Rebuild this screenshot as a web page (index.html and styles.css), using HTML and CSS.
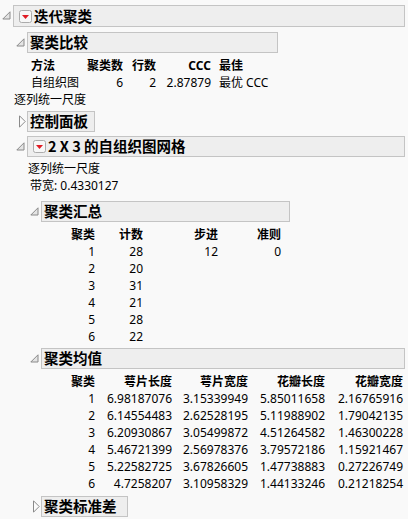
FILE: index.html
```html
<!DOCTYPE html>
<html lang="zh">
<head>
<meta charset="utf-8">
<link rel="stylesheet" href="styles.css">
</head>
<body>
<section class="ol top">
  <div class="oh">
    <span class="tw"><svg class="tri-open" width="9" height="9" viewBox="0 0 9 9"><polygon points="8,0.8 8,8 0.8,8" fill="#e4e4e4" stroke="#8a8a8a" stroke-width="1"/></svg></span>
    <div class="ob full big"><svg class="rb" width="13" height="13" viewBox="0 0 13 13"><rect x="0.5" y="0.5" width="12" height="12" rx="2" fill="#f7f7f7" stroke="#ababab"/><polygon points="3,5 10,5 6.5,9" fill="#e01b24"/></svg><span>迭代聚类</span></div>
  </div>
  <div class="obody">
    <section class="ol m5">
      <div class="oh">
        <span class="tw"><svg class="tri-open" width="9" height="9" viewBox="0 0 9 9"><polygon points="8,0.8 8,8 0.8,8" fill="#e4e4e4" stroke="#8a8a8a" stroke-width="1"/></svg></span>
        <div class="ob w-cmp"><span>聚类比较</span></div>
      </div>
      <div class="obody">
        <table class="t t-cmp">
          <tr class="hd"><td class="c1">方法</td><td class="c2">聚类数</td><td class="c3">行数</td><td class="c4">CCC</td><td class="c5">最佳</td></tr>
          <tr><td class="c1">自组织图</td><td class="c2">6</td><td class="c3">2</td><td class="c4">2.87879</td><td class="c5">最优 CCC</td></tr>
        </table>
      </div>
    </section>
    <div class="txt">逐列统一尺度</div>
    <section class="ol m3">
      <div class="oh">
        <span class="tw"><svg class="tri-closed" width="7" height="13" viewBox="0 0 7 13"><polygon points="0.5,0.8 6.2,6.5 0.5,12.2" fill="#fbfbfb" stroke="#8a8a8a" stroke-width="1"/></svg></span>
        <div class="ob w-ctl"><span>控制面板</span></div>
      </div>
    </section>
    <section class="ol m4">
      <div class="oh">
        <span class="tw"><svg class="tri-open" width="9" height="9" viewBox="0 0 9 9"><polygon points="8,0.8 8,8 0.8,8" fill="#e4e4e4" stroke="#8a8a8a" stroke-width="1"/></svg></span>
        <div class="ob full"><svg class="rb" width="13" height="13" viewBox="0 0 13 13"><rect x="0.5" y="0.5" width="12" height="12" rx="2" fill="#f7f7f7" stroke="#ababab"/><polygon points="3,5 10,5 6.5,9" fill="#e01b24"/></svg><span>2 X 3 的自组织图网格</span></div>
      </div>
      <div class="obody">
        <div class="txt first">逐列统一尺度</div>
        <div class="txt bw">带宽: 0.4330127</div>
        <section class="ol m7">
          <div class="oh">
            <span class="tw"><svg class="tri-open" width="9" height="9" viewBox="0 0 9 9"><polygon points="8,0.8 8,8 0.8,8" fill="#e4e4e4" stroke="#8a8a8a" stroke-width="1"/></svg></span>
            <div class="ob w-sum"><span>聚类汇总</span></div>
          </div>
          <div class="obody">
            <table class="t t-sum">
              <tr class="hd"><td class="s1">聚类</td><td class="s2">计数</td><td class="s3">步进</td><td class="s4">准则</td></tr>
              <tr><td class="s1">1</td><td class="s2">28</td><td class="s3">12</td><td class="s4">0</td></tr>
              <tr><td class="s1">2</td><td class="s2">20</td><td class="s3"></td><td class="s4"></td></tr>
              <tr><td class="s1">3</td><td class="s2">31</td><td class="s3"></td><td class="s4"></td></tr>
              <tr><td class="s1">4</td><td class="s2">21</td><td class="s3"></td><td class="s4"></td></tr>
              <tr><td class="s1">5</td><td class="s2">28</td><td class="s3"></td><td class="s4"></td></tr>
              <tr><td class="s1">6</td><td class="s2">22</td><td class="s3"></td><td class="s4"></td></tr>
            </table>
          </div>
        </section>
        <section class="ol m3">
          <div class="oh">
            <span class="tw"><svg class="tri-open" width="9" height="9" viewBox="0 0 9 9"><polygon points="8,0.8 8,8 0.8,8" fill="#e4e4e4" stroke="#8a8a8a" stroke-width="1"/></svg></span>
            <div class="ob full"><span>聚类均值</span></div>
          </div>
          <div class="obody">
            <table class="t t-mean">
              <tr class="hd"><td class="m1">聚类</td><td class="m2">萼片长度</td><td class="m3">萼片宽度</td><td class="m4">花瓣长度</td><td class="m5">花瓣宽度</td></tr>
              <tr><td class="m1">1</td><td class="m2">6.98187076</td><td class="m3">3.15339949</td><td class="m4">5.85011658</td><td class="m5">2.16765916</td></tr>
              <tr><td class="m1">2</td><td class="m2">6.14554483</td><td class="m3">2.62528195</td><td class="m4">5.11988902</td><td class="m5">1.79042135</td></tr>
              <tr><td class="m1">3</td><td class="m2">6.20930867</td><td class="m3">3.05499872</td><td class="m4">4.51264582</td><td class="m5">1.46300228</td></tr>
              <tr><td class="m1">4</td><td class="m2">5.46721399</td><td class="m3">2.56978376</td><td class="m4">3.79572186</td><td class="m5">1.15921467</td></tr>
              <tr><td class="m1">5</td><td class="m2">5.22582725</td><td class="m3">3.67826605</td><td class="m4">1.47738883</td><td class="m5">0.27226749</td></tr>
              <tr><td class="m1">6</td><td class="m2">4.7258207</td><td class="m3">3.10958329</td><td class="m4">1.44133246</td><td class="m5">0.21218254</td></tr>
            </table>
          </div>
        </section>
        <section class="ol m4">
          <div class="oh">
            <span class="tw"><svg class="tri-closed" width="7" height="13" viewBox="0 0 7 13"><polygon points="0.5,0.8 6.2,6.5 0.5,12.2" fill="#fbfbfb" stroke="#8a8a8a" stroke-width="1"/></svg></span>
            <div class="ob w-sd"><span>聚类标准差</span></div>
          </div>
        </section>
      </div>
    </section>
  </div>
</section>
</body>
</html>
```

FILE: styles.css
```css
html, body {
  margin: 0;
  padding: 0;
  background: #f9f9f9;
}
body {
  width: 408px;
  height: 519px;
  overflow: hidden;
  font-family: "Noto Sans", "Noto Sans CJK SC", sans-serif;
  font-size: 12px;
  line-height: 17px;
  color: #000;
}
.ol.top { margin-top: 5px; }
.m3 { margin-top: 3px; }
.m4 { margin-top: 4px; }
.m5 { margin-top: 5px; }
.m7 { margin-top: 7px; }

.oh {
  display: flex;
  align-items: center;
}
.tw {
  width: 13px;
  flex: none;
  display: flex;
  align-items: center;
}
.tri-open { margin-left: 2px; margin-top: -1px; display: block; }
.tri-closed { margin-left: 5px; display: block; }

.ob {
  box-sizing: border-box;
  height: 21px;
  border: 1px solid #c4c4c4;
  background: #eeeeee;
  display: flex;
  align-items: center;
  padding-left: 2px;
  font-family: "Noto Sans CJK SC", "Noto Sans", sans-serif;
  font-weight: bold;
  font-size: 14.5px;
  line-height: 1;
  white-space: nowrap;
}
.ob.big { height: 22px; }
.ob.full { flex: 1; margin-right: 3px; }
.w-cmp { width: 251px; }
.w-ctl { width: 68px; }
.w-sum { width: 249px; }
.w-sd { width: 87px; }
.rb { display: block; margin-left: 3px; margin-right: 2px; flex: none; }
.ob span { display: block; }

.obody { margin-left: 14px; }
.txt { white-space: nowrap; }
.txt.first { margin-top: 3px; }
.txt.bw { padding-left: 2px; }

.t {
  border-collapse: collapse;
  border-spacing: 0;
  table-layout: fixed;
  margin-top: 4px;
}
.t td {
  padding: 0;
  white-space: nowrap;
  text-align: right;
  height: 17px;
}
.t .hd td { font-weight: bold; }
.t-cmp { margin-left: 3px; }
.t-cmp .c1 { width: 52px; text-align: left; }
.t-cmp .c2 { width: 40px; }
.t-cmp .c3 { width: 33px; }
.t-cmp .c4 { width: 55px; }
.t-cmp .c5 { width: 70px; text-align: left; padding-left: 8px; }

.t-sum .s1 { width: 53px; }
.t-sum .s2 { width: 48px; }
.t-sum .s3 { width: 75px; }
.t-sum .s4 { width: 63px; }

.t-mean .m1 { width: 53px; }
.t-mean .m2 { width: 77px; }
.t-mean .m3 { width: 76px; }
.t-mean .m4 { width: 77px; }
.t-mean .m5 { width: 78px; }
```
